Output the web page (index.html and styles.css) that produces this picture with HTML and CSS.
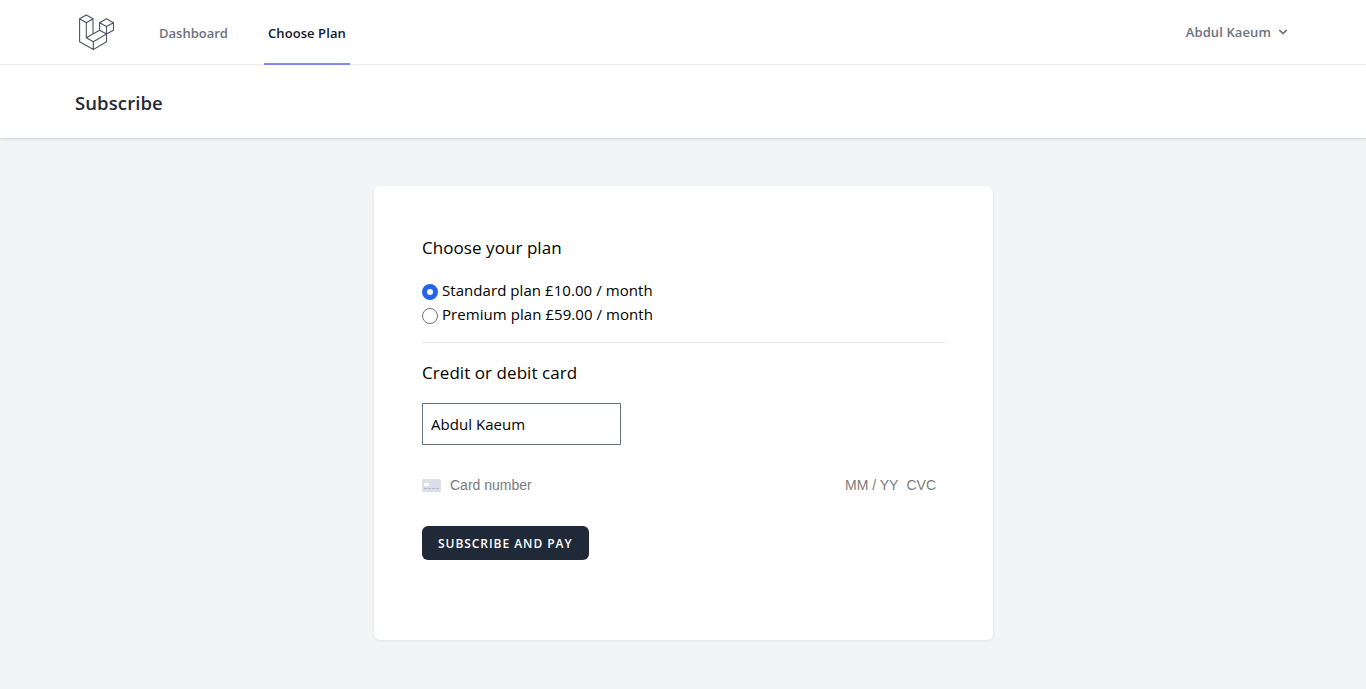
FILE: index.html
```html
<!DOCTYPE html>
<html lang="en">
<head>
<meta charset="utf-8">
<title>Subscribe</title>
<link rel="stylesheet" href="styles.css">
</head>
<body>
<nav class="nav">
  <div class="nav-left">
    <a class="logo"><svg width="36" height="37" viewBox="0 0 36 37" fill="none" stroke="#4b5563" stroke-width="1.1" stroke-linejoin="round" stroke-linecap="round"><path d="M7.3.9 14 4.7V19.7M7.3.9.6 4.7V27.7L14.3 35.6 27.5 27.7V12.6M.6 4.7 7.3 8.7 14 4.7M7.3 8.7V23.7L14.3 27.7 27.5 20 34.5 16.2V8.7L27.5 4.7 20.6 8.7V16.2L7.3 23.7M20.6 8.7 27.5 12.6 34.5 8.7M20.6 16.2 27.5 20M14.3 27.7V35.6"/></svg></a>
    <a class="link dashboard"><span>Dashboard</span></a>
    <a class="link active"><span>Choose Plan</span></a>
  </div>
  <button class="user"><span>Abdul Kaeum</span><svg width="16" height="16" viewBox="0 0 20 20" fill="#6b7280"><path fill-rule="evenodd" clip-rule="evenodd" d="M5.293 7.293a1 1 0 011.414 0L10 10.586l3.293-3.293a1 1 0 111.414 1.414l-4 4a1 1 0 01-1.414 0l-4-4a1 1 0 010-1.414z"/></svg></button>
</nav>
<header class="header"><h2 class="title">Subscribe</h2></header>
<main class="main">
  <form class="card">
    <h3 class="heading choose">Choose your plan</h3>
    <label class="plan"><input class="radio" type="radio" name="plan" checked><span class="standard">Standard plan £10.00 / month</span></label>
    <label class="plan"><input class="radio" type="radio" name="plan"><span class="premium">Premium plan £59.00 / month</span></label>
    <div class="divider"></div>
    <h3 class="heading credit">Credit or debit card</h3>
    <input class="name" type="text" value="Abdul Kaeum">
    <div class="stripe">
      <svg width="19" height="13" viewBox="0 0 19 13"><rect width="19" height="13" rx="1.5" fill="#dcdfe6"/><rect x="2" y="4" width="5" height="3" rx=".8" fill="#fff"/><path d="M2 9.5H17" stroke="#b4bccb" stroke-dasharray="3 1"/></svg>
      <span class="number">Card number</span><span class="expiry">MM / YY</span><span class="cvc">CVC</span>
    </div>
    <button class="pay" type="button"><span>SUBSCRIBE AND PAY</span></button>
  </form>
</main>
</body>
</html>
```
FILE: styles.css
```css
* { box-sizing: border-box; }
body { margin: 0; height: 689px; overflow: hidden; background: #f3f4f6; color: #000; font: 16px/24px "Open Sans", "Noto Sans", sans-serif; }
h2, h3 { margin: 0; font-weight: 400; }
.nav { display: flex; justify-content: space-between; height: 65px; padding: 0 75px 0 79px; background: #fff; border-bottom: 1px solid #f0f1f3; }
.nav-left { display: flex; height: 65px; }
.logo { width: 36px; padding-top: 13.5px; margin-right: 40px; }
.logo svg { display: block; }
.link { padding: 23px 4px 0; height: 65px; font-size: 13px; line-height: 20px; font-weight: 600; color: #6b7280; white-space: nowrap; }
.dashboard { width: 77px; margin-right: 32px; letter-spacing: 0; }
.active { width: 86px; color: #111827; border-bottom: 2px solid #818cf8; letter-spacing: .08px; }
.user { display: flex; align-items: center; gap: 4px; height: 64px; padding: 0; border: 0; background: none; color: #6b7280; font: 600 13px/20px "Open Sans", sans-serif; letter-spacing: .11px; }
.header { position: relative; height: 73px; padding: 24px 75px; background: #fff; box-shadow: 0 1px 3px rgba(0,0,0,.1), 0 1px 2px rgba(0,0,0,.06); }
.title { font-size: 18.5px; line-height: 28px; font-weight: 600; color: #1f2937; letter-spacing: .1px; }
.main { padding: 48px 373px 0 374px; }
.card { height: 454px; padding: 48px; background: #fff; border-radius: 6px; box-shadow: 0 1px 3px rgba(0,0,0,.08); }
.heading { font-size: 17px; line-height: 28px; white-space: nowrap; letter-spacing: .06px; }
.choose { margin-bottom: 17px; }
.plan { display: flex; height: 24px; white-space: nowrap; font-size: 15px; line-height: 22px; letter-spacing: .06px; }
.radio { appearance: none; flex: none; width: 16px; height: 16px; margin: 5px 4px 0 0; border: 1px solid #6b7280; border-radius: 50%; background: #fff; }
.radio:checked { border: 5px solid #2563eb; }
.divider { height: 1px; margin: 15px 0 16px; background: #e5e7eb; }
.credit { margin-bottom: 16px; }
.name { display: block; width: 199px; height: 42px; padding: 8px; border: 1px solid #6b7280; border-radius: 0; background: #fff; color: #000; font: 15px/24px "Open Sans", sans-serif; letter-spacing: .04px; }
.stripe { display: flex; align-items: center; height: 18px; margin: 31px 9px 32px 0; color: #7b7b7b; font: 14px/18px "Liberation Sans", Arial, sans-serif; }
.number { flex: 1; margin-left: 9px; }
.cvc { margin-left: 8px; }
.pay { width: 167px; height: 34px; padding: 1px 0 0 16px; border: 0; border-radius: 6px; background: #1f2937; color: #fff; text-align: left; white-space: nowrap; font: 600 12px/16px "Open Sans", sans-serif; letter-spacing: .95px; }
```
